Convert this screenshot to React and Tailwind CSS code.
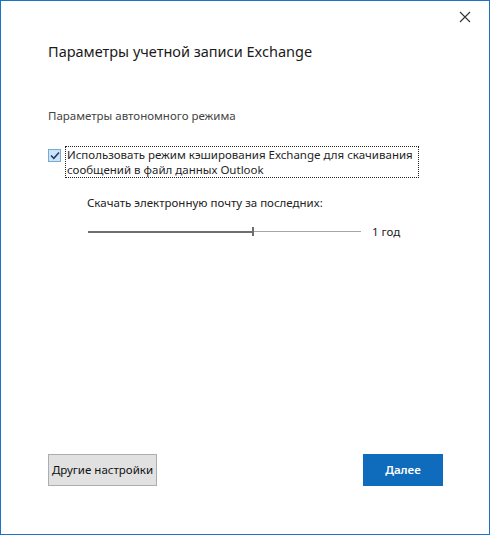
import React, { useState } from 'react';

function CloseIcon() {
  return (
    <svg width="12" height="12" viewBox="0 0 12 12">
      <path d="M1 1 L11 11 M11 1 L1 11" stroke="#333" strokeWidth="1.1" />
    </svg>
  );
}

export default function App() {
  const [cached, setCached] = useState(true);

  return (
    <div
      className="w-[490px] h-[535px] bg-white border border-[#1a73c8] flex flex-col text-[#1f1f1f]"
      style={{ fontFamily: '"Noto Sans", "Open Sans", sans-serif' }}
    >
      <div className="flex justify-end pt-[10px] pr-[18px]">
        <button className="w-[12px] h-[12px] flex items-center justify-center">
          <CloseIcon />
        </button>
      </div>

      <div className="pl-[47px] pr-[40px] flex-1 flex flex-col">
        <h1 className="mt-[18px] text-[14.5px] leading-[20px] text-[#1a1a1a]">
          Параметры учетной записи Exchange
        </h1>

        <div className="mt-[47px] text-[11.5px] leading-[16px] text-[#444]">
          Параметры автономного режима
        </div>

        <div className="mt-[22px] flex items-start gap-[4px]">
          <button
            onClick={() => setCached(!cached)}
            className="mt-[3px] w-[13px] h-[13px] border border-[#7aa9d6] bg-[#cce4f7] flex items-center justify-center shrink-0"
          >
            {cached && (
              <svg width="10" height="9" viewBox="0 0 10 9">
                <path d="M1 4.5 L3.8 7.3 L9 1.5" stroke="#1f3b63" strokeWidth="1.5" fill="none" />
              </svg>
            )}
          </button>
          <label className="border border-dotted border-[#222] px-[1px] text-[11.5px] leading-[15px] w-[354px]">
            Использовать режим кэширования Exchange для скачивания сообщений в файл данных Outlook
          </label>
        </div>

        <div className="pl-[39px] mt-[17px] text-[11.5px] leading-[16px] text-[#222]">
          Скачать электронную почту за последних:
        </div>

        <div className="pl-[40px] mt-[12px] flex items-center">
          <div className="w-[273px] flex items-center h-[10px]">
            <div className="w-[164px] h-[2px] bg-[#6e6e6e]" />
            <div className="w-[2px] h-[9px] bg-[#6e6e6e]" />
            <div className="flex-1 h-px bg-[#a6a6a6]" />
          </div>
          <span className="ml-[11px] text-[11.5px] text-[#222]">1 год</span>
        </div>

        <div className="flex-1" />

        <div className="flex justify-between items-center mb-[48px] pr-[6px]">
          <button className="w-[109px] h-[32px] bg-[#e1e1e1] border border-[#adadad] text-[11.5px] text-[#111]">
            Другие настройки
          </button>
          <button className="w-[80px] h-[32px] bg-[#0f6cbd] text-white text-[11.5px] font-semibold">
            Далее
          </button>
        </div>
      </div>
    </div>
  );
}
